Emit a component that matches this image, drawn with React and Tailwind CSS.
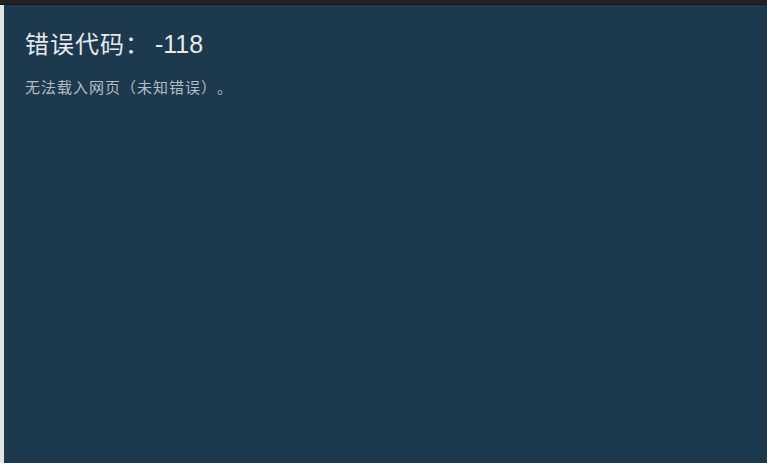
export default function App() {
  return (
    <div className="w-[767px] h-[463px] flex flex-col overflow-hidden bg-[#1c394e]">
      <div className="h-[5px] w-full bg-[#232323] border-b border-[#161616] shrink-0" />
      <div className="flex flex-1">
        <div className="w-[4px] bg-[#e4e4e4] shrink-0" />
        <div
          className="flex-1 pl-[21px] pt-[22px] [text-spacing-trim:space-all]"
          style={{ fontFamily: '"Liberation Sans", "Noto Sans CJK SC", sans-serif' }}
        >
          <h1 className="text-[24px] leading-[34px] text-[#e6e9ec] font-normal whitespace-nowrap">
            <span className="tracking-[1px]">错误代码：</span>
            <span className="ml-[5px] text-[25px]">-118</span>
          </h1>
          <p className="mt-[15px] text-[15px] leading-[22px] tracking-[1px] text-[#b4bcc4] whitespace-nowrap">
            无法载入网页（未知错误）。
          </p>
        </div>
      </div>
    </div>
  );
}
